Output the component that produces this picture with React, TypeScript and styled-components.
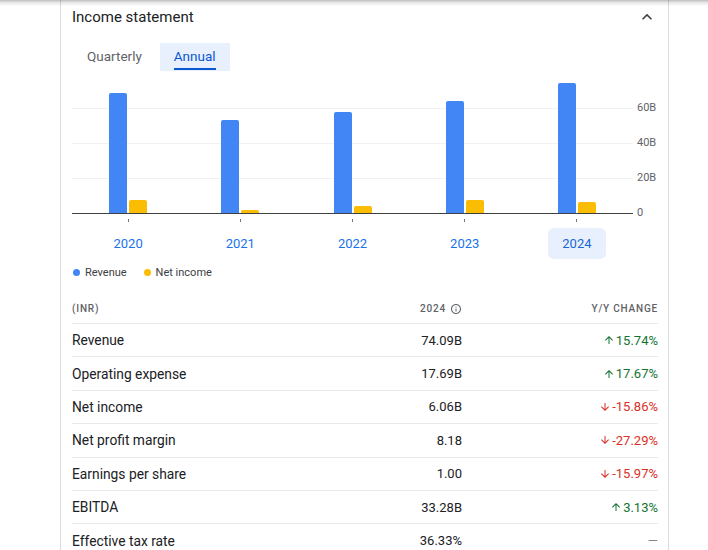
import React from "react";
import styled, { createGlobalStyle } from "styled-components";

const Global = createGlobalStyle`
  html, body { margin: 0; padding: 0; background: #fff; }
  body { font-family: Roboto, "Liberation Sans", Arial, sans-serif; color: #202124; }
`;

const TopShadow = styled.div`
  position: fixed;
  top: 0;
  left: 0;
  right: 0;
  height: 6px;
  background: linear-gradient(to bottom, rgba(0,0,0,0.26), rgba(0,0,0,0.1) 40%, rgba(0,0,0,0));
  pointer-events: none;
  z-index: 5;
`;

const Card = styled.section`
  box-sizing: border-box;
  margin-left: 60px;
  width: 609px;
  border-left: 1px solid #dadce0;
  border-right: 1px solid #dadce0;
  padding: 0 10px 0 11px;
`;

const Header = styled.div`
  height: 34px;
  display: flex;
  align-items: center;
  justify-content: space-between;
`;

const Title = styled.h2`
  margin: 0;
  font-size: 15px;
  font-weight: 400;
  color: #202124;
`;

const IconBtn = styled.span`
  display: flex;
  width: 20px;
  height: 20px;
  margin-right: 1px;
  color: #3c4043;
`;

const Tabs = styled.div`
  margin-top: 9px;
  display: flex;
  height: 28px;
`;

const Tab = styled.div<{ $active?: boolean }>`
  display: flex;
  padding: 0 ${(p) => (p.$active ? 14 : 15)}px;
  margin-left: ${(p) => (p.$active ? 3 : 0)}px;
  background: ${(p) => (p.$active ? "#e8f0fe" : "transparent")};
  font-size: 13.5px;
  color: ${(p) => (p.$active ? "#0b57d0" : "#5f6368")};
`;

const TabLabel = styled.span<{ $active?: boolean }>`
  display: flex;
  align-items: center;
  margin-bottom: 1px;
  border-bottom: 2px solid ${(p) => (p.$active ? "#0b57d0" : "transparent")};
`;

const ChartGrid = styled.div`
  margin-top: 2px;
  display: grid;
  grid-template-columns: 561px 25px;
`;

const Plot = styled.div`
  height: 140px;
  display: flex;
  border-bottom: 1px solid #3c4043;
  background-image: repeating-linear-gradient(
    to top,
    transparent 0px,
    transparent 34px,
    #eff1f3 34px,
    #eff1f3 35px
  );
  background-size: 100% 105px;
  background-position: bottom left;
  background-repeat: no-repeat;
`;

const Category = styled.div`
  flex: 1;
  display: flex;
  justify-content: center;
  align-items: flex-end;
  gap: 2px;
`;

const Bar = styled.div<{ $color: string }>`
  width: 18px;
  background: ${(p) => p.$color};
  border-radius: 2px 2px 0 0;
`;

const Axis = styled.div`
  display: flex;
  flex-direction: column;
  gap: 21px;
  padding-top: 28px;
  padding-left: 4px;
`;

const AxisLabel = styled.span`
  font-size: 11px;
  line-height: 14px;
  height: 14px;
  color: #5f6368;
`;

const TickRow = styled.div`
  display: flex;
  height: 14px;
`;

const TickCell = styled.div`
  flex: 1;
  display: flex;
  justify-content: center;
  padding-top: 5px;
`;

const Tick = styled.span`
  width: 1px;
  height: 3px;
  background: #70757a;
`;

const Years = styled.div`
  display: flex;
  height: 31px;
`;

const YearCell = styled.div`
  flex: 1;
  display: flex;
  justify-content: center;
`;

const Year = styled.span<{ $active?: boolean }>`
  width: 58px;
  display: flex;
  align-items: center;
  justify-content: center;
  border-radius: 6px;
  font-size: 13px;
  background: ${(p) => (p.$active ? "#e8f0fe" : "transparent")};
  color: ${(p) => (p.$active ? "#1967d2" : "#1a73e8")};
`;

const Legend = styled.div`
  margin-top: 5px;
  display: flex;
  align-items: center;
  gap: 17px;
  height: 16px;
  padding-left: 1px;
`;

const LegendItem = styled.span`
  display: flex;
  align-items: center;
  gap: 5px;
  font-size: 11px;
  color: #3c4043;
`;

const Dot = styled.span<{ $color: string }>`
  width: 7px;
  height: 7px;
  border-radius: 50%;
  background: ${(p) => p.$color};
`;

const Table = styled.div`
  margin-top: 10px;
  display: grid;
  grid-template-columns: 1fr 150px 196px;
`;

const Row = styled.div`
  display: contents;
`;

const Cell = styled.div<{ $head?: boolean; $align?: "left" | "right"; $label?: boolean }>`
  box-sizing: border-box;
  height: ${(p) => (p.$head ? "33px" : "33.4px")};
  display: flex;
  align-items: center;
  justify-content: ${(p) => (p.$align === "right" ? "flex-end" : "flex-start")};
  border-top: ${(p) => (p.$head ? "none" : "1px solid #e8eaed")};
  font-size: ${(p) => (p.$head ? "10px" : p.$label ? "13.8px" : "13px")};
  letter-spacing: ${(p) => (p.$head ? "0.8px" : "0")};
  font-weight: ${(p) => (p.$head ? 500 : 400)};
  color: ${(p) => (p.$head ? "#5f6368" : "#202124")};
  padding-top: ${(p) => (p.$head ? "4px" : "0")};
  gap: 4px;
`;

const Change = styled.span<{ $dir: "up" | "down" | "none" }>`
  display: flex;
  align-items: center;
  gap: 1px;
  font-size: 13px;
  color: ${(p) => (p.$dir === "up" ? "#137333" : p.$dir === "down" ? "#d93025" : "#80868b")};
`;

const Arrow = ({ dir }: { dir: "up" | "down" }) => (
  <svg width="12" height="12" viewBox="0 0 24 24" fill="currentColor">
    {dir === "up" ? (
      <path d="M4 12l1.41 1.41L11 7.83V20h2V7.83l5.58 5.59L20 12l-8-8-8 8z" />
    ) : (
      <path d="M20 12l-1.41-1.41L13 16.17V4h-2v12.17l-5.58-5.59L4 12l8 8 8-8z" />
    )}
  </svg>
);

const InfoIcon = () => (
  <svg width="12" height="12" viewBox="0 0 24 24" fill="currentColor">
    <path d="M11 7h2v2h-2zm0 4h2v6h-2zm1-9C6.48 2 2 6.48 2 12s4.48 10 10 10 10-4.48 10-10S17.52 2 12 2zm0 18c-4.41 0-8-3.59-8-8s3.59-8 8-8 8 3.59 8 8-3.59 8-8 8z" />
  </svg>
);

const years = ["2020", "2021", "2022", "2023", "2024"];
const revenue = [68.6, 53.1, 57.7, 64.0, 74.09];
const netIncome = [7.4, 1.6, 4.0, 7.4, 6.06];
const PX_PER_B = 35 / 20;

type Dir = "up" | "down" | "none";
const rows: { label: string; value: string; change: string; dir: Dir }[] = [
  { label: "Revenue", value: "74.09B", change: "15.74%", dir: "up" },
  { label: "Operating expense", value: "17.69B", change: "17.67%", dir: "up" },
  { label: "Net income", value: "6.06B", change: "-15.86%", dir: "down" },
  { label: "Net profit margin", value: "8.18", change: "-27.29%", dir: "down" },
  { label: "Earnings per share", value: "1.00", change: "-15.97%", dir: "down" },
  { label: "EBITDA", value: "33.28B", change: "3.13%", dir: "up" },
  { label: "Effective tax rate", value: "36.33%", change: "—", dir: "none" },
];

export default function App() {
  return (
    <>
      <Global />
      <TopShadow />
      <Card>
        <Header>
          <Title>Income statement</Title>
          <IconBtn>
            <svg width="20" height="20" viewBox="0 0 24 24" fill="currentColor">
              <path d="M12 8l-6 6 1.41 1.41L12 10.83l4.59 4.58L18 14z" />
            </svg>
          </IconBtn>
        </Header>
        <Tabs>
          <Tab>
            <TabLabel>Quarterly</TabLabel>
          </Tab>
          <Tab $active>
            <TabLabel $active>Annual</TabLabel>
          </Tab>
        </Tabs>
        <ChartGrid>
          <div>
            <Plot>
              {years.map((y, i) => (
                <Category key={y}>
                  <Bar $color="#4285f4" style={{ height: `${revenue[i] * PX_PER_B}px` }} />
                  <Bar $color="#fbbc04" style={{ height: `${netIncome[i] * PX_PER_B}px` }} />
                </Category>
              ))}
            </Plot>
            <TickRow>
              {years.map((y) => (
                <TickCell key={y}>
                  <Tick />
                </TickCell>
              ))}
            </TickRow>
            <Years>
              {years.map((y) => (
                <YearCell key={y}>
                  <Year $active={y === "2024"}>{y}</Year>
                </YearCell>
              ))}
            </Years>
          </div>
          <Axis>
            <AxisLabel>60B</AxisLabel>
            <AxisLabel>40B</AxisLabel>
            <AxisLabel>20B</AxisLabel>
            <AxisLabel>0</AxisLabel>
          </Axis>
        </ChartGrid>
        <Legend>
          <LegendItem>
            <Dot $color="#4285f4" />
            Revenue
          </LegendItem>
          <LegendItem>
            <Dot $color="#fbbc04" />
            Net income
          </LegendItem>
        </Legend>
        <Table>
          <Row>
            <Cell $head>(INR)</Cell>
            <Cell $head $align="right">
              2024 <InfoIcon />
            </Cell>
            <Cell $head $align="right">Y/Y CHANGE</Cell>
          </Row>
          {rows.map((r) => (
            <Row key={r.label}>
              <Cell $label>{r.label}</Cell>
              <Cell $align="right">{r.value}</Cell>
              <Cell $align="right">
                <Change $dir={r.dir}>
                  {r.dir !== "none" && <Arrow dir={r.dir} />}
                  {r.change}
                </Change>
              </Cell>
            </Row>
          ))}
        </Table>
      </Card>
    </>
  );
}
